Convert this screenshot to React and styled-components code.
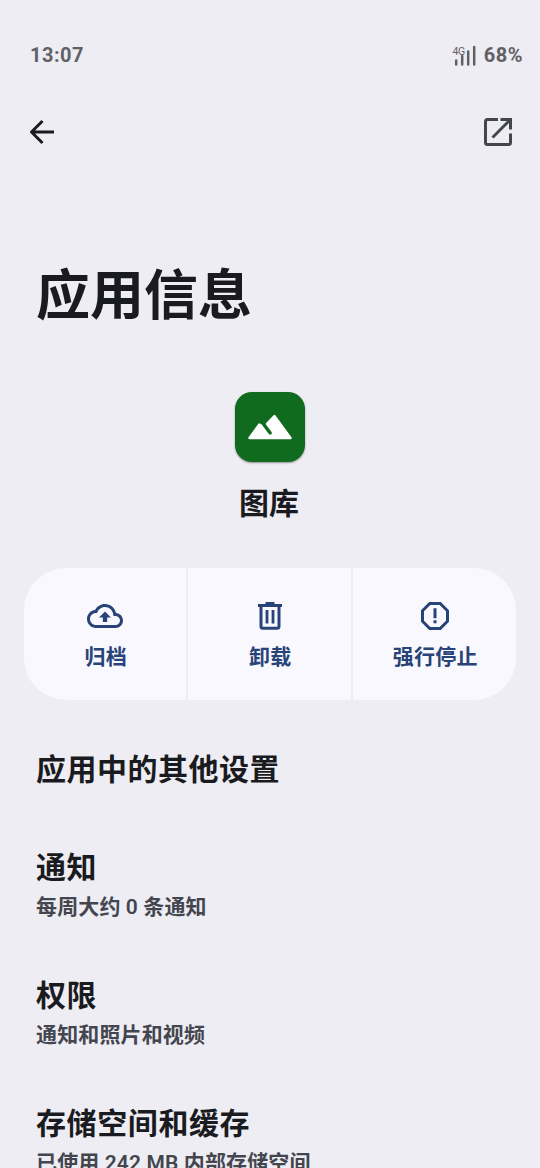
import React from 'react';
import styled, { createGlobalStyle } from 'styled-components';

const GlobalStyle = createGlobalStyle`
  * { box-sizing: border-box; }
  html, body { margin: 0; background: #eeedf3; }
  body {
    height: 1168px;
    overflow: hidden;
    font-family: Roboto, 'Noto Sans CJK SC', sans-serif;
    color: #1a1b20;
  }
`;

const Screen = styled.main`
  width: 540px;
  height: 1168px;
  overflow: hidden;
  background: #eeedf3;
`;

const StatusBar = styled.header`
  display: flex;
  align-items: center;
  justify-content: space-between;
  height: 110px;
  padding: 0 17px 0 30px;
  font-size: 20px;
  font-weight: 700;
  letter-spacing: 0.5px;
  color: #616165;
`;

const StatusRight = styled.div`
  display: flex;
  align-items: center;
  gap: 8px;
`;

const Toolbar = styled.nav`
  display: flex;
  align-items: center;
  justify-content: space-between;
  height: 44px;
  padding: 0 24px;
`;

const IconButton = styled.button`
  display: flex;
  padding: 0;
  border: 0;
  background: none;
  color: ${p => p.$color};
  cursor: pointer;
`;

const Title = styled.h1`
  margin: 103px 0 0;
  padding-left: 36px;
  font-size: 54px;
  font-weight: 600;
  line-height: 80px;
`;

const AppHeader = styled.section`
  display: flex;
  flex-direction: column;
  align-items: center;
  margin-top: 55px;
`;

const AppIcon = styled.div`
  display: flex;
  width: 70px;
  height: 70px;
  border-radius: 17px;
  background: #116b1e;
  box-shadow: 0 1px 2px rgba(0, 0, 0, 0.4);
`;

const AppName = styled.h2`
  margin: 20px 0 0;
  padding-right: 2px;
  font-size: 30px;
  font-weight: 600;
  line-height: 44px;
`;

const Actions = styled.div`
  display: grid;
  grid-template-columns: 162px 163px 163px;
  gap: 2px;
  height: 132px;
  margin: 42px 24px 0;
  border-radius: 42px;
  overflow: hidden;
`;

const Action = styled.button`
  display: flex;
  flex-direction: column;
  align-items: center;
  padding: 30px 0 0;
  border: 0;
  background: #f9f8fe;
  color: #284377;
  font: inherit;
  font-size: 21px;
  font-weight: 700;
  line-height: 32px;
  letter-spacing: 0.2px;
  cursor: pointer;
`;

const ActionLabel = styled.span`
  margin-top: 7px;
  padding-left: 1.5px;
`;

const SectionTitle = styled.h3`
  margin: 48px 0 0;
  padding-left: 36px;
  font-size: 30px;
  font-weight: 600;
  line-height: 44px;
  letter-spacing: 0.5px;
`;

const SettingsList = styled.ul`
  margin: 34px 0 0;
  padding: 0;
  list-style: none;
`;

const Setting = styled.li`
  height: 128px;
  padding: 20px 36px 0;
`;

const SettingTitle = styled.div`
  font-size: 30px;
  font-weight: 600;
  line-height: 44px;
  letter-spacing: 0.6px;
`;

const SettingSummary = styled.div`
  margin-top: 1px;
  font-size: 21px;
  font-weight: 600;
  line-height: 32px;
  letter-spacing: 0.13px;
  color: #44464f;
`;

const SignalIcon = () => (
  <svg width="24" height="24" viewBox="0 0 24 24">
    <text x="0.5" y="11.5" fontSize="10.5" fontWeight="400" letterSpacing="-0.3" fill="#616165">4G</text>
    <g stroke="#616165" strokeWidth="2.5" strokeLinecap="round">
      <path d="M4.2 17.500v4M10.200 13v8.500M16.200 8.500v13M22.200 4v17.500" />
    </g>
  </svg>
);

const BackIcon = () => (
  <svg width="36" height="36" viewBox="0 0 36 36" fill="none" stroke="currentColor" strokeWidth="3">
    <path d="M30 18H8M18.500 7 7.500 18 18.500 29" strokeLinejoin="round" />
  </svg>
);

const OpenIcon = () => (
  <svg width="36" height="36" viewBox="0 0 36 36" fill="none" stroke="currentColor" strokeWidth="3">
    <path d="M18 5.500H7.500Q5.500 5.500 5.500 7.500V28.500Q5.500 30.500 7.500 30.500H28.500Q30.500 30.500 30.500 28.500V19.500" />
    <path d="M20.500 5.500H30.500V15.500M29.500 6.500 12.500 23.500" />
  </svg>
);

const MountainIcon = () => (
  <svg width="70" height="70" viewBox="0 0 70 70">
    <path
      d="M14.500 46 24.300 32.500 29.500 35.500 32 31.800 39.400 24 55.500 46Z"
      fill="#fff"
      stroke="#fff"
      strokeWidth="2.4"
      strokeLinejoin="round"
    />
    <path d="M29 32.800 35.200 41" stroke="#116b1e" strokeWidth="3.400" strokeLinecap="round" />
  </svg>
);

const ArchiveIcon = () => (
  <svg width="36" height="36" viewBox="0 0 24 24" fill="currentColor">
    <path d="M19.350 10.040C18.670 6.590 15.640 4 12 4 9.110 4 6.600 5.640 5.350 8.040 2.340 8.360 0 10.910 0 14c0 3.310 2.690 6 6 6h13c2.760 0 5-2.240 5-5 0-2.640-2.050-4.780-4.650-4.960zM19 18H6c-2.210 0-4-1.790-4-4 0-2.050 1.530-3.760 3.560-3.970l1.070-.11.5-.95C8.080 7.140 9.940 6 12 6c2.620 0 4.880 1.860 5.390 4.430l.3 1.500 1.530.11c1.560.1 2.780 1.410 2.780 2.960 0 1.650-1.350 3-3 3zM8 13h2.550v3h2.900v-3H16l-4-4z" />
  </svg>
);

const TrashIcon = () => (
  <svg width="36" height="36" viewBox="0 0 36 36" fill="none" stroke="currentColor" strokeWidth="3">
    <path d="M6 7.500H30M13.500 5.500H22.500M9 8V28.300Q9 30.300 11 30.300H25Q27 30.300 27 28.300V8" />
    <path d="M15 12V25.500M21 12V25.500" strokeWidth="2.800" />
  </svg>
);

const StopIcon = () => (
  <svg width="36" height="36" viewBox="0 0 36 36" fill="none" stroke="currentColor" strokeWidth="3">
    <path d="M12.800 5.500H23.200L30.500 12.800V23.200L23.200 30.500H12.800L5.500 23.200V12.800ZM18 10.300V20.300M18 22.300V25.300" />
  </svg>
);

const actions = [
  { label: '归档', Icon: ArchiveIcon },
  { label: '卸载', Icon: TrashIcon },
  { label: '强行停止', Icon: StopIcon },
];

const settings = [
  { title: '通知', summary: '每周大约 0 条通知' },
  { title: '权限', summary: '通知和照片和视频' },
  { title: '存储空间和缓存', summary: '已使用 242 MB 内部存储空间' },
];

export default function App() {
  return (
    <Screen lang="zh-CN">
      <GlobalStyle />
      <StatusBar>
        <span>13:07</span>
        <StatusRight>
          <SignalIcon />
          <span>68%</span>
        </StatusRight>
      </StatusBar>
      <Toolbar>
        <IconButton $color="#1a1b20"><BackIcon /></IconButton>
        <IconButton $color="#44464f"><OpenIcon /></IconButton>
      </Toolbar>
      <Title>应用信息</Title>
      <AppHeader>
        <AppIcon><MountainIcon /></AppIcon>
        <AppName>图库</AppName>
      </AppHeader>
      <Actions>
        {actions.map(({ label, Icon }) => (
          <Action key={label}>
            <Icon />
            <ActionLabel>{label}</ActionLabel>
          </Action>
        ))}
      </Actions>
      <SectionTitle>应用中的其他设置</SectionTitle>
      <SettingsList>
        {settings.map(item => (
          <Setting key={item.title}>
            <SettingTitle>{item.title}</SettingTitle>
            <SettingSummary>{item.summary}</SettingSummary>
          </Setting>
        ))}
      </SettingsList>
    </Screen>
  );
}
